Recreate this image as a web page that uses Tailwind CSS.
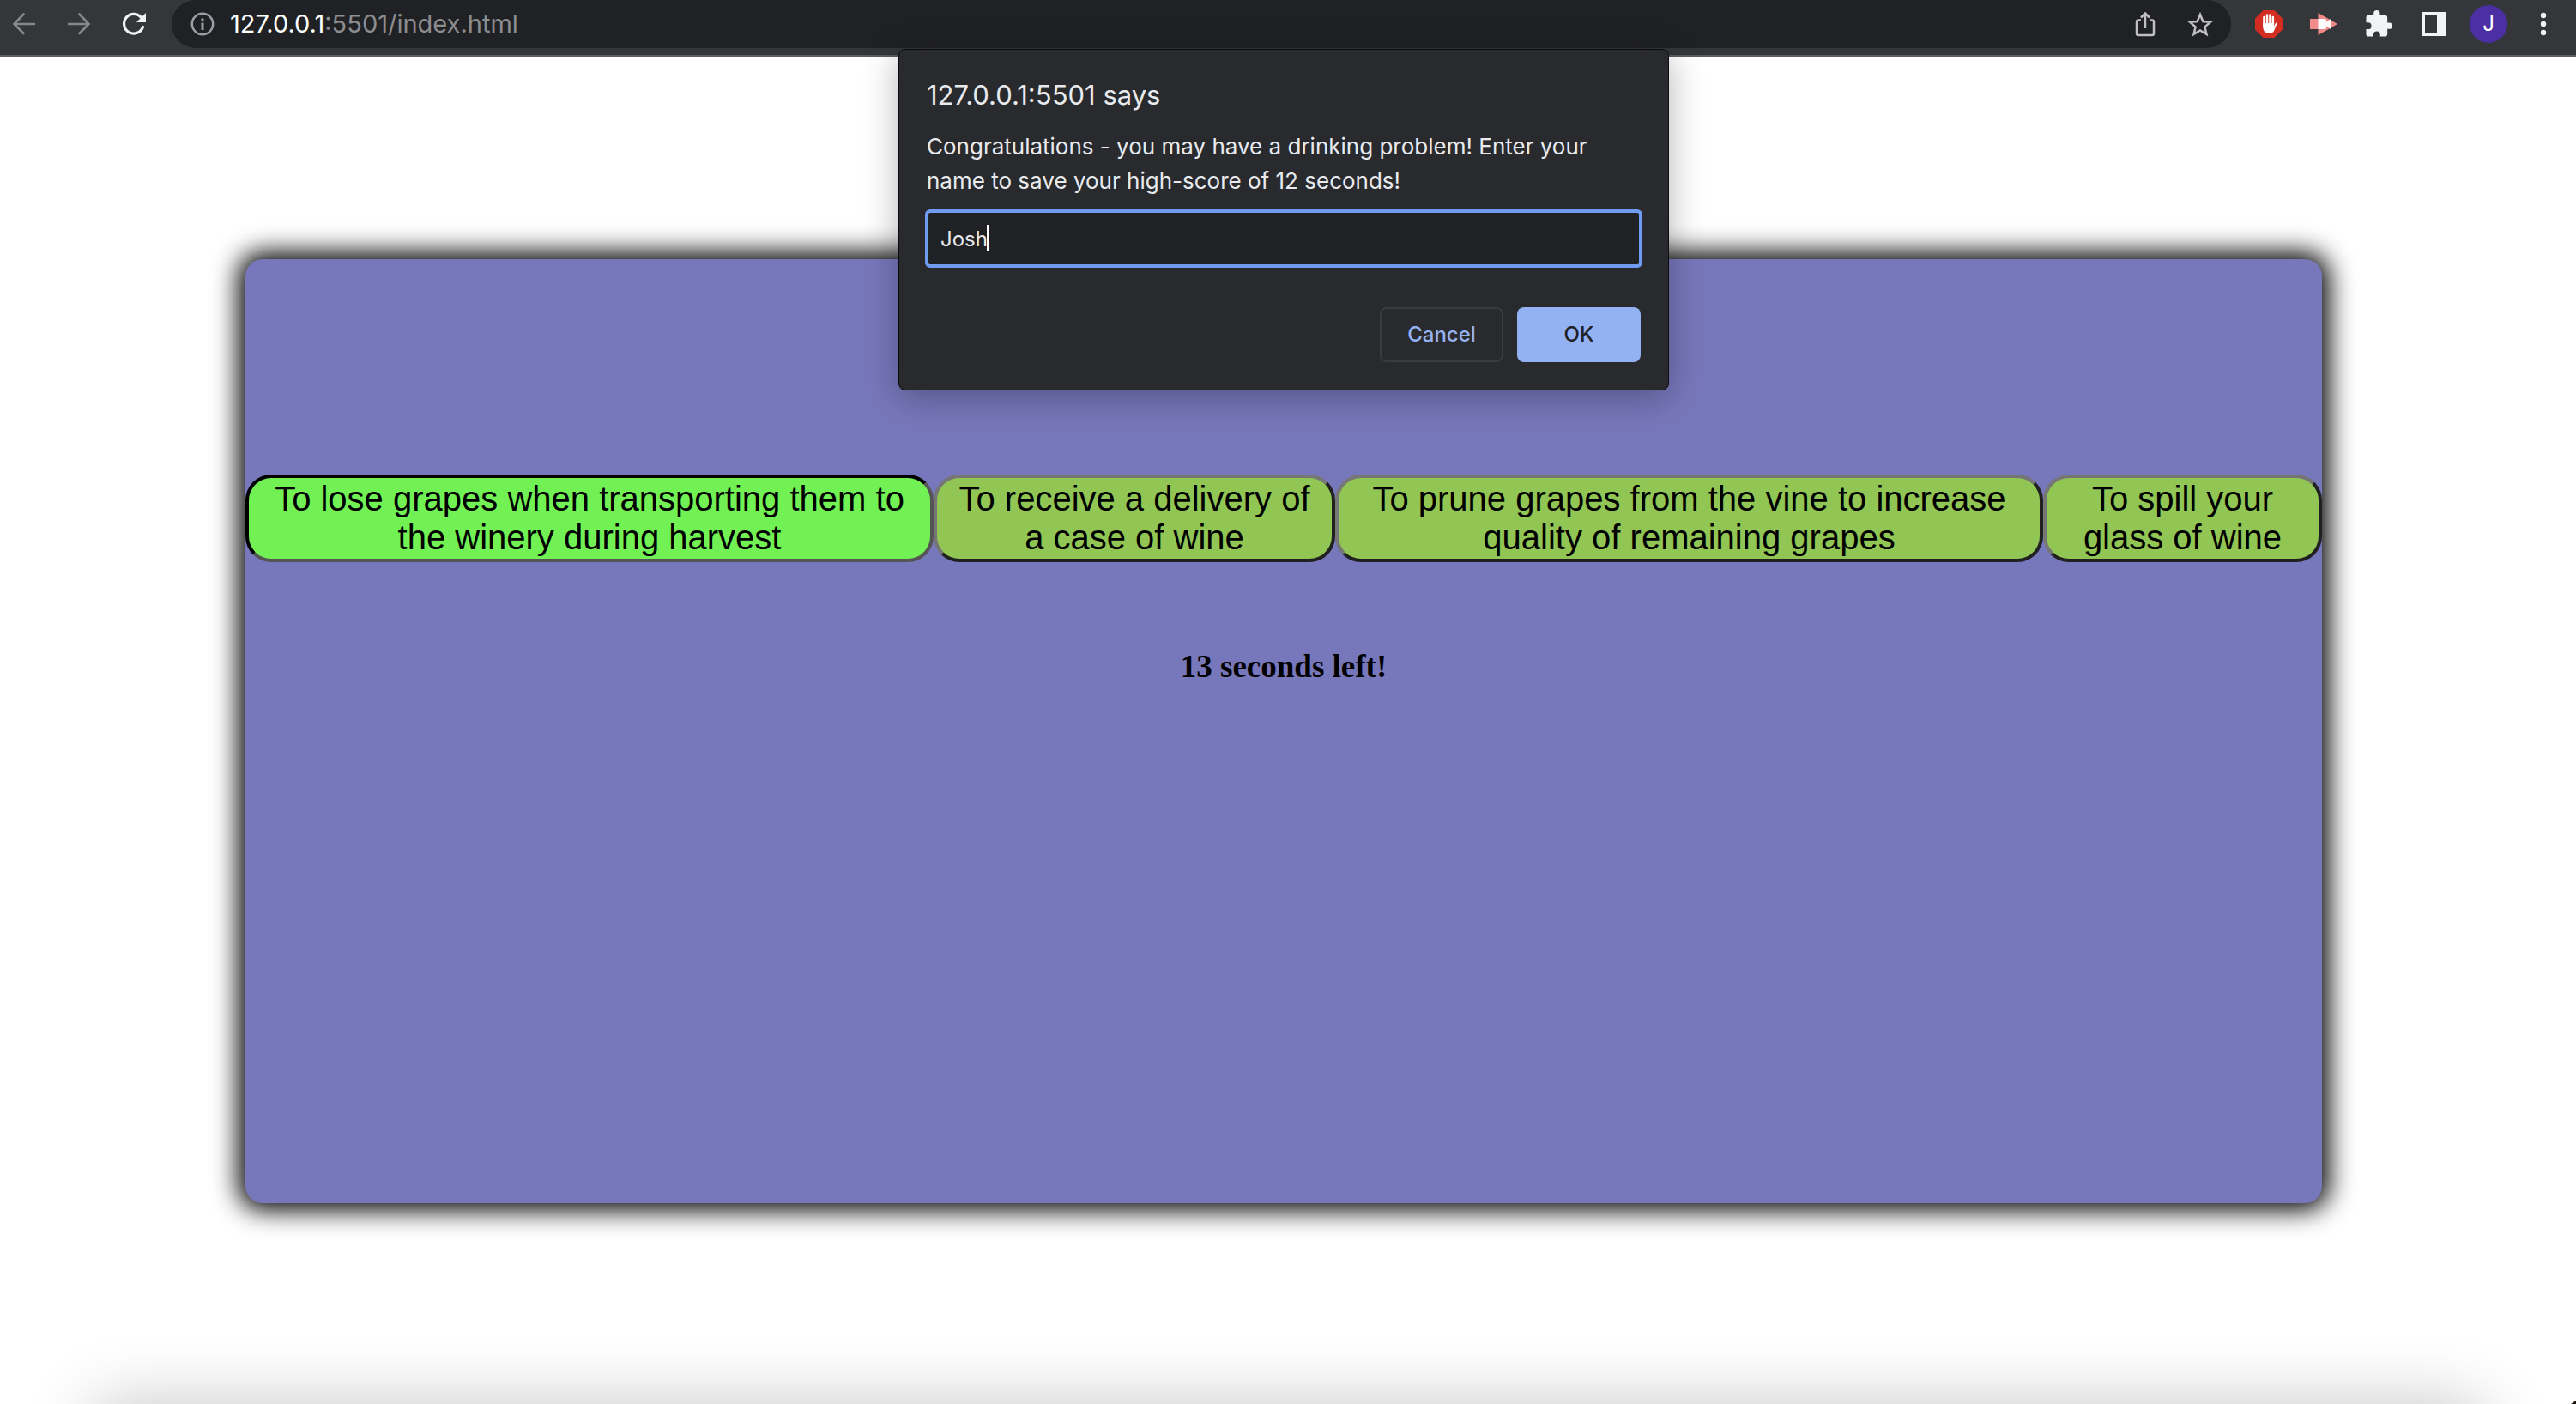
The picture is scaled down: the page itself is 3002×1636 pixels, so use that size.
<!DOCTYPE html>
<html lang="en">
<head>
<meta charset="utf-8">
<meta name="viewport" content="width=device-width, initial-scale=1">
<title>index.html</title>
<script src="https://cdn.jsdelivr.net/npm/@tailwindcss/browser@4"></script>
</head>
<body class="relative flex min-h-screen flex-col overflow-x-hidden bg-white">

<!-- Browser toolbar -->
<header class="flex h-[66px] items-start border-b-2 border-[#5c5c60] bg-[#35363a] pl-[12px] pr-[22px] font-[Inter,sans-serif]">
  <nav class="flex h-14 items-center gap-8" aria-label="Navigation">
    <button aria-label="Back" class="size-8"><svg viewBox="0 0 32 32" fill="none" stroke="#87888b" stroke-width="2.6" stroke-linecap="round"><path d="M15.500 4.500L4.500 16l11 11M4.500 16H28"/></svg></button>
    <button aria-label="Forward" class="size-8"><svg viewBox="0 0 32 32" fill="none" stroke="#87888b" stroke-width="2.6" stroke-linecap="round"><path d="M16.500 4.500L27.500 16l-11 11M27.500 16H4"/></svg></button>
    <button aria-label="Reload" class="size-8"><svg viewBox="0 0 32 32"><path d="M26.500 19.500A11.300 11.300 0 1 1 24.500 8.500" fill="none" stroke="#f1f3f4" stroke-width="3.200" stroke-linecap="round"/><path d="M30 3v11H19z" fill="#f1f3f4"/></svg></button>
  </nav>
  <div class="ml-7 flex h-14 flex-1 items-center rounded-full bg-[#202124] pl-5 pr-5">
    <button aria-label="Site information" class="size-8"><svg viewBox="0 0 32 32"><circle cx="16" cy="16" r="12.200" fill="none" stroke="#9aa0a6" stroke-width="2.500"/><path d="M14.500 14.500h3V23h-3zM14.500 9.500h3v2.700h-3z" fill="#9aa0a6"/></svg></button>
    <div class="ml-4 flex-1 text-[29px] leading-8 text-[#8c8d8f]"><span class="text-white">127.0.0.1</span>:5501/index.html</div>
    <div class="flex gap-8">
      <button aria-label="Share" class="size-8"><svg viewBox="0 0 32 32" fill="none" stroke="#c0c0c0" stroke-width="2.500"><path d="M11 11.500H8a2 2 0 0 0-2 2V27a2 2 0 0 0 2 2h16a2 2 0 0 0 2-2V13.500a2 2 0 0 0-2-2h-3M16 21V4M11 8.500l5-5 5 5"/></svg></button>
      <button aria-label="Bookmark" class="size-8"><svg viewBox="0 0 32 32" fill="none" stroke="#c0c0c0" stroke-width="2.500"><path d="M16 5l3.300 8 8.700.7-6.600 5.700 2 8.500L16 23.400l-7.400 4.500 2-8.500L4 13.700l8.700-.7z"/></svg></button>
    </div>
  </div>
  <div class="ml-7 flex h-14 items-center gap-8">
    <button aria-label="Ad blocker" class="size-8"><svg viewBox="0 0 32 32"><path d="M9.500 0h13L32 9.500v13L22.500 32h-13L0 22.500v-13z" fill="#d32d22"/><path d="M10.500 8v10M14 5.500V18M17.500 5.500V18M20.800 8v10" stroke="#fff" stroke-width="2.600" stroke-linecap="round"/><path d="M9.200 15h12.900v4l1.500-3.500c.8-1.500 2.200-1 1.900.3L22.500 23c-1 2.800-3 4-6 4-4.500 0-7.300-3-7.300-8z" fill="#fff"/></svg></button>
    <button aria-label="Recorder" class="size-8"><svg viewBox="0 0 32 32"><path d="M0 10h10v12H0z" fill="#f28b87"/><path d="M9.500 3L32 16 9.500 29z" fill="#f28b87"/><path d="M9.500 10H17q2 0 2 2v2l5-4v12l-5-4v2q0 2-2 2H9.500z" fill="#fff"/></svg></button>
    <button aria-label="Extensions" class="size-8"><svg viewBox="1 1 22 22" fill="#f1f3f4"><path d="M20.500 11H19V7c0-1.100-.9-2-2-2h-4V3.500a2.500 2.500 0 0 0-5 0V5H4c-1.100 0-2 .9-2 2v3.800h1.500a2.700 2.700 0 0 1 0 5.400H2V20c0 1.100.9 2 2 2h3.800v-1.500a2.700 2.700 0 0 1 5.400 0V22H17c1.100 0 2-.9 2-2v-4h1.500a2.500 2.500 0 0 0 0-5z"/></svg></button>
    <button aria-label="Side panel" class="size-8"><svg viewBox="0 0 32 32"><path d="M2 2h28v28H2zM6 6v20h14V6z" fill="#f1f3f4" fill-rule="evenodd"/></svg></button>
  </div>
  <button aria-label="Profile" class="ml-[26px] mt-[6px] size-11 rounded-full bg-[#4b2fa3] text-[24px] text-white">J</button>
  <button aria-label="Menu" class="ml-[26px] mt-3 size-8"><svg viewBox="0 0 32 32" fill="#f1f3f4"><circle cx="16" cy="6" r="3.200"/><circle cx="16" cy="16" r="3.200"/><circle cx="16" cy="26" r="3.200"/></svg></button>
</header>

<!-- Quiz -->
<main class="flex flex-1 flex-col pb-[134px] pl-[286px] pr-[296px] pt-[236px]">
  <section class="flex-1 rounded-[20px] bg-[#7777bb] pt-[251px] shadow-[0_0_30px_8px_#000]">
    <div class="grid grid-cols-[802fr_468fr_825fr_325fr] font-['Liberation_Sans',Arial,sans-serif] text-[40px] leading-[45px] text-black">
      <button class="rounded-[30px] border-4 border-b-[#555] border-l-black border-r-[#555] border-t-black bg-[#72f155] py-[2px]">To lose grapes when transporting them to<br>the winery during harvest</button>
      <button class="rounded-[30px] border-4 border-b-[#212121] border-l-[#767676] border-r-[#212121] border-t-[#767676] bg-[#91c554] py-[2px]">To receive a delivery of<br>a case of wine</button>
      <button class="rounded-[30px] border-4 border-b-[#212121] border-l-[#767676] border-r-[#212121] border-t-[#767676] bg-[#91c554] py-[2px]">To prune grapes from the vine to increase<br>quality of remaining grapes</button>
      <button class="rounded-[30px] border-4 border-b-[#212121] border-l-[#767676] border-r-[#212121] border-t-[#767676] bg-[#91c554] py-[2px]">To spill your<br>glass of wine</button>
    </div>
    <h3 class="mt-[100px] text-center font-['Liberation_Serif','Times_New_Roman',serif] text-[37px] font-bold leading-[44px] text-black">13 seconds left!</h3>
  </section>
</main>

<!-- Shade along the bottom edge of the window -->
<footer class="relative h-[100px] overflow-hidden">
  <div class="mx-[110px] mt-[100px] h-40 shadow-[0_0_80px_rgba(0,0,0,0.23)]"></div>
  <svg class="absolute bottom-0 right-0 h-1 w-[6px]" viewBox="0 0 6 4" aria-hidden="true"><path d="M0 4L6 0v4z" fill="#1c1210"/></svg>
</footer>

<!-- Prompt -->
<div class="absolute inset-x-0 top-[57px] flex justify-center pr-[10px] font-[Inter,sans-serif]">
  <form role="dialog" aria-labelledby="prompt-title" class="w-[898px] rounded-lg border border-[#0c0c0d] bg-[#292a2d] px-[30px] pb-8 pt-[33px] text-[#e8eaed] shadow-[0_8px_40px_rgba(0,0,0,0.3)]">
    <h1 id="prompt-title" class="px-[2px] text-[31px] leading-10">127.0.0.1:5501 says</h1>
    <label for="player" class="mt-5 block px-[2px] text-[26px] leading-10">Congratulations - you may have a drinking problem! Enter your<br>name to save your high-score of 12 seconds!</label>
    <div class="relative mt-[13px]">
      <input id="player" type="text" value="Josh" class="block h-[68px] w-full rounded-md border-4 border-[#6f9bf0] bg-[#202124] px-[14px] text-[24px] text-[#e8eaed] outline-none">
      <span class="absolute left-[72px] top-[18px] h-[30px] w-[2px] bg-white"></span>
    </div>
    <div class="mt-[46px] flex justify-end gap-4 pr-[2px] text-[24px] font-medium">
      <button type="button" class="h-16 w-36 rounded-lg border-2 border-[#3a3b3f] text-[#93b2f4]">Cancel</button>
      <button type="submit" class="h-16 w-36 rounded-lg bg-[#93b2f4] text-[#202124]">OK</button>
    </div>
  </form>
</div>
</body>
</html>
